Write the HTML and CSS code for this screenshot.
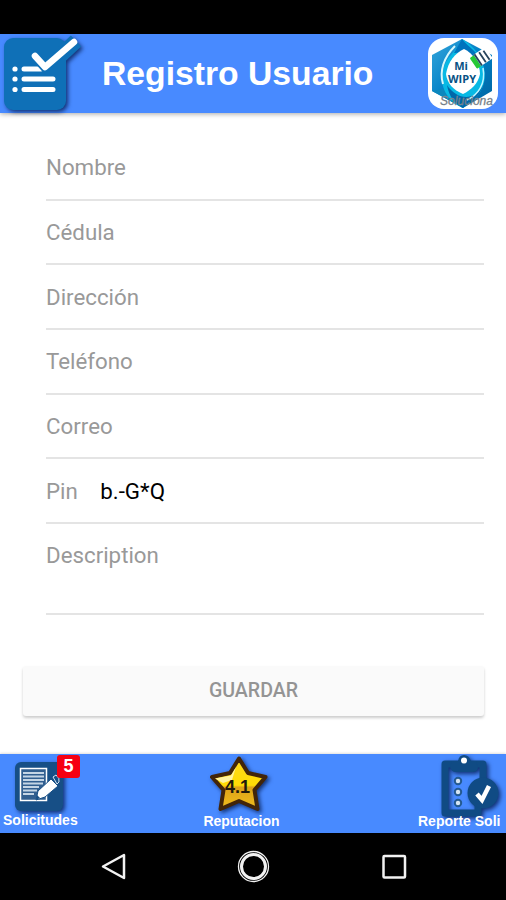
FILE: index.html
```html
<!DOCTYPE html>
<html lang="es">
<head>
    <meta charset="UTF-8">
    <meta name="viewport" content="width=device-width, initial-scale=1.0">
    <title>Registro Usuario</title>
    <link rel="stylesheet" href="styles.css">
</head>
<body>
    <div class="status-bar"></div>

    <header class="header">
        <svg class="header-icon" viewBox="0 0 86 79">
            <g class="icon-shadow">
                <rect x="4" y="4" width="62" height="72" rx="9" fill="#0f70b7"/>
                <path d="M35 25L45 36L76 7" fill="none" stroke="#0f70b7" stroke-width="15"/>
            </g>
            <path d="M24 35H41M24 45H53M24 55.500H53" stroke="#fff" stroke-width="5" stroke-linecap="round"/>
            <g fill="#fff">
                <circle cx="15" cy="35" r="2.600"/>
                <circle cx="15" cy="45" r="2.600"/>
                <circle cx="15" cy="55.500" r="2.600"/>
            </g>
            <path d="M35 22L45 33L74 8" fill="none" stroke="#0f70b7" stroke-width="10"/>
            <path d="M35 22L45 33L74 8" fill="none" stroke="#fff" stroke-width="6.500" stroke-linecap="round" stroke-linejoin="round"/>
        </svg>
        <h1 class="title">Registro Usuario</h1>
        <svg class="logo" viewBox="0 0 72 73">
            <defs>
                <linearGradient id="hex" x1="0" y1="0" x2="1" y2="1">
                    <stop offset="0" stop-color="#36a6db"/>
                    <stop offset=".5" stop-color="#007fc6"/>
                    <stop offset="1" stop-color="#00649f"/>
                </linearGradient>
            </defs>
            <rect x="1" y="1" width="70" height="71" rx="16" fill="#fff"/>
            <path d="M35 2L65 18V54L36 71L5 54V18Z" fill="url(#hex)"/>
            <path d="M5 54L20 51L36 71Z" fill="#0b87bd"/>
            <path d="M35 2C54 13 62 34 56 49C51 63 39 66 36 71C20 64 12 49 16 33C19 19 30 15 35 2Z" fill="#08b9e4"/>
            <path d="M35 2C42 11 53 16 57 29L39 15L27 16Z" fill="#0073bd"/>
            <path d="M20 48C29 62 47 66 56 48C52 62 41 66 36 71C28 67 22 60 20 48Z" fill="#0067a9"/>
            <path d="M28 9C17 20 12 34 16 47" fill="none" stroke="#d7f8fc" stroke-width="2"/>
            <path d="M56 31C59 47 51 58 40 63" fill="none" stroke="#bdf4ff" stroke-width="1.500"/>
            <path d="M37 12C46 16 53 27 53 37C51 47 44 53 36 57C26 53 20 46 19 37C21 25 28 16 37 12Z" fill="#fff"/>
            <g transform="translate(53 22) rotate(-34)">
                <rect x="-8" y="-6.500" width="5" height="13" rx="1" fill="#27c936"/>
                <rect x="-3" y="-7" width="14" height="13.500" fill="#fff"/>
                <path d="M-2-7V6.500M3-6V6M7.500-5V6" stroke="#28435b" stroke-width="1.800"/>
            </g>
            <text class="logo-name" x="34" y="33">Mi</text>
            <text class="logo-name" x="35" y="45.500" textLength="28" lengthAdjust="spacingAndGlyphs">WIPY</text>
            <text class="logo-tag" x="13" y="68" textLength="53">Soluciona</text>
        </svg>
    </header>

    <main class="content">
        <form class="form">
            <div class="item"><label>Nombre</label></div>
            <div class="item"><label>Cédula</label></div>
            <div class="item"><label>Dirección</label></div>
            <div class="item"><label>Teléfono</label></div>
            <div class="item"><label>Correo</label></div>
            <div class="item"><label>Pin</label><span class="value">b.-G*Q</span></div>
            <div class="item item-area"><label>Description</label></div>
            <button class="save-button" type="button">GUARDAR</button>
        </form>
    </main>

    <footer class="tabs">
        <div class="tab">
            <svg class="tab-icon" viewBox="0 0 84 62">
                <rect class="icon-shadow" x="15" y="8" width="48" height="49" rx="6" fill="#174f86"/>
                <rect x="20.500" y="14.500" width="26" height="32" fill="#315f90" stroke="#fff" stroke-width="1.500"/>
                <path d="M23 19H44M23 22.500H44M23 26H44M23 29.500H43M23 33H39M23 36.500H37M23 40H34" stroke="#c4d5e5" stroke-width="1.800"/>
                <path d="M36 46L38 37L51 25L58 32L45 43Z" fill="#fff" stroke="#174f86" stroke-width="1"/>
                <path d="M36 46L37 41L40 44Z" fill="#174f86"/>
                <path d="M53 23L56 21Q60 24 59 28L57 30Z" fill="#174f86" stroke="#d5e3ef" stroke-width="1"/>
            </svg>
            <span class="tab-label">Solicitudes</span>
            <span class="badge">5</span>
        </div>
        <div class="tab tab-center">
            <svg class="tab-icon" viewBox="0 0 84 62">
                <defs>
                    <linearGradient id="gold" x1="0" y1="0" x2="0" y2="1">
                        <stop offset="0" stop-color="#ffd91c"/>
                        <stop offset=".53" stop-color="#ffdc05"/>
                        <stop offset=".57" stop-color="#dda219"/>
                        <stop offset="1" stop-color="#f0bd1d"/>
                    </linearGradient>
                </defs>
                <path class="icon-shadow" d="M41 4.500L50 19L67.500 23L56.500 36L59.500 55L41 47L22.500 55L25.500 36L14 23L32 19Z" fill="url(#gold)" stroke="#422509" stroke-width="4" stroke-linejoin="round"/>
                <path d="M17 24.500L33 21.500L38 13L34 26L25 29Z" fill="#fff3a0"/>
                <text class="rating" x="39.500" y="38.500">4.1</text>
            </svg>
            <span class="tab-label">Reputacion</span>
        </div>
        <div class="tab tab-right">
            <svg class="tab-icon" viewBox="0 0 84 62">
                <g class="icon-shadow">
                    <path d="M60 50V59H27V10H65V25" fill="none" stroke="#104b84" stroke-width="7" stroke-linejoin="round"/>
                    <path d="M34 7H40Q41 1 46 1Q51 1 53 7H58L60 14Q59 18 55 18H38Q33 18 32 13Z" fill="#104b84"/>
                    <circle cx="65" cy="39" r="15.500" fill="#104b84"/>
                </g>
                <circle cx="46" cy="6.500" r="3" fill="#fff"/>
                <g fill="#d6e5f3" stroke="#245a91" stroke-width="2">
                    <circle cx="40" cy="27" r="3.200"/>
                    <circle cx="40" cy="38" r="3.200"/>
                    <circle cx="40" cy="49" r="3.200"/>
                </g>
                <path d="M59 40L64 46L71 32" fill="none" stroke="#fff" stroke-width="4.500"/>
            </svg>
            <span class="tab-label">Reporte Soli</span>
        </div>
    </footer>

    <nav class="nav-bar">
        <svg viewBox="0 0 34 34"><path d="M27 5V28L6 16.500Z"/></svg>
        <svg viewBox="0 0 34 34"><circle class="ring" cx="16.500" cy="16.500" r="15"/><circle class="home" cx="16.500" cy="16.500" r="12"/></svg>
        <svg viewBox="0 0 34 34"><rect x="6.500" y="6" width="21.500" height="21.500" rx="1"/></svg>
    </nav>
</body>
</html>
```
FILE: styles.css
```css
* {
    box-sizing: border-box;
}

body {
    margin: 0;
    height: 900px;
    display: flex;
    flex-direction: column;
    overflow: hidden;
    background: #fff;
    font-family: Roboto, sans-serif;
}

.status-bar {
    height: 34px;
    background: #000;
}

.header {
    height: 79px;
    display: flex;
    align-items: center;
    background: #488aff;
    box-shadow: 0 1px 5px rgba(0,0,0,0.35);
    font-family: "Liberation Sans", Arial, sans-serif;
}

.header-icon {
    width: 86px;
    height: 79px;
    overflow: visible;
}

.icon-shadow {
    filter: drop-shadow(2px 2px 2px rgba(0,20,70,0.75));
}

.title {
    margin: 0 0 0 16px;
    width: 325px;
    color: #fff;
    font-size: 33.7px;
    line-height: 79px;
    white-space: nowrap;
}

.logo {
    width: 72px;
    height: 73px;
}

.logo-name {
    fill: #075184;
    font: bold 11px/1 "Open Sans", sans-serif;
    text-anchor: middle;
}

.logo-tag {
    fill: #66717b;
    stroke: #8d969d;
    stroke-width: 0.3px;
    font: italic 12px "Liberation Sans", sans-serif;
}

.content {
    flex: 1;
    padding: 23px 22px 0 23px;
}

.form {
    padding-left: 23px;
}

.item {
    height: 64.7px;
    display: flex;
    align-items: center;
    border-bottom: 2px solid #e4e4e4;
    color: #999;
    font-size: 22.3px;
}

.item-area {
    height: 91px;
    align-items: flex-start;
    padding-top: 18px;
}

.value {
    margin-left: 22.5px;
    color: #000;
}

.save-button {
    display: block;
    width: 461px;
    height: 50px;
    margin: 50.5px 0 0 -23px;
    padding: 0;
    border: none;
    border-radius: 3px;
    background: #fafafa;
    box-shadow: 0 2px 3px rgba(0,0,0,0.2);
    color: #949494;
    font: 500 19.6px Roboto, sans-serif;
}

.tabs {
    height: 79px;
    display: flex;
    justify-content: space-between;
    background: #488aff;
    box-shadow: 0 -1px 2px rgba(0,0,0,0.12);
}

.tab {
    position: relative;
    width: 84px;
    display: flex;
    flex-direction: column;
}

.tab-center {
    align-items: center;
    margin-right: 22px;
}

.tab-right {
    margin-right: 4px;
}

.tab-icon {
    width: 84px;
    height: 62px;
    flex: none;
    overflow: visible;
}

.tab-label {
    position: relative;
    margin-top: -3px;
    padding-left: 3px;
    color: #fff;
    font: bold 14px/16px "Liberation Sans", Arial, sans-serif;
    white-space: nowrap;
}

.tab:first-child .tab-label {
    margin-top: -4px;
}

.tab-right .tab-label {
    padding-left: 0;
}

.badge {
    position: absolute;
    top: 1px;
    left: 57px;
    width: 23px;
    height: 23px;
    border-radius: 3px;
    background: #f60012;
    color: #fff;
    font: bold 18px/23px "Liberation Sans", Arial, sans-serif;
    text-align: center;
}

.rating {
    fill: #21190c;
    font: bold 18px "Liberation Sans", Arial, sans-serif;
    text-anchor: middle;
}

.nav-bar {
    height: 67px;
    display: flex;
    justify-content: space-between;
    align-items: center;
    padding: 0 95px 0 97px;
    background: #000;
}

.nav-bar svg {
    width: 34px;
    height: 34px;
    fill: none;
    stroke: #f2f2f2;
    stroke-width: 2.5px;
    stroke-linejoin: round;
}

.nav-bar .home {
    stroke-width: 3px;
}

.nav-bar .ring {
    stroke-width: 1.3px;
}
```
